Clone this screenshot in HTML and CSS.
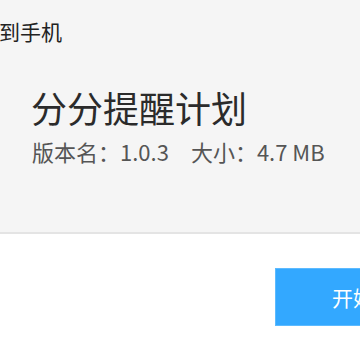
FILE: index.html
```html
<!DOCTYPE html>
<html lang="zh-CN">
<head>
    <meta charset="UTF-8">
    <meta name="viewport" content="width=device-width, initial-scale=1.0">
    <title>分分提醒计划</title>
    <link rel="stylesheet" href="styles.css">
</head>
<body>
    <div class="dialog">
        <div class="app-info">
            <div class="dialog-title">发送到手机</div>
            <h1 class="app-name">分分提醒计划</h1>
            <div class="app-meta">
                <span>版本名：1.0.3</span>
                <span>大小：4.7 MB</span>
            </div>
        </div>
        <div class="actions">
            <button class="start-btn">开始安装</button>
        </div>
    </div>
</body>
</html>
```

FILE: styles.css
```css
body {
    margin: 0;
    font-family: "Noto Sans CJK SC", "Noto Sans", sans-serif;
    color: #333;
    background-color: #fff;
    overflow: hidden;
}

.dialog {
    width: 360px;
    height: 360px;
}

.app-info {
    background-color: #f5f5f5;
    border-bottom: 2px solid #e4e4e4;
    height: 234px;
    box-sizing: border-box;
    padding-top: 15px;
}

.dialog-title {
    font-size: 21px;
    line-height: 32px;
    margin-left: -43px;
    color: #222;
}

.app-name {
    margin: 38px 0 0 31px;
    font-size: 36px;
    font-weight: normal;
    line-height: 44px;
    color: #2b2b2b;
}

.app-meta {
    margin: 7px 0 0 32px;
    font-size: 22px;
    line-height: 30px;
    color: #555;
    display: flex;
    gap: 22px;
}

.actions {
    display: flex;
    justify-content: flex-end;
    padding-top: 34px;
}

.start-btn {
    margin-right: -113px;
    width: 198px;
    height: 58px;
    background-color: #33a8ff;
    border: 1px solid #5cbaff;
    color: #fff;
    font-family: "Noto Sans CJK SC", sans-serif;
    font-size: 21px;
    padding: 0;
    text-align: center;
    cursor: pointer;
}
```
